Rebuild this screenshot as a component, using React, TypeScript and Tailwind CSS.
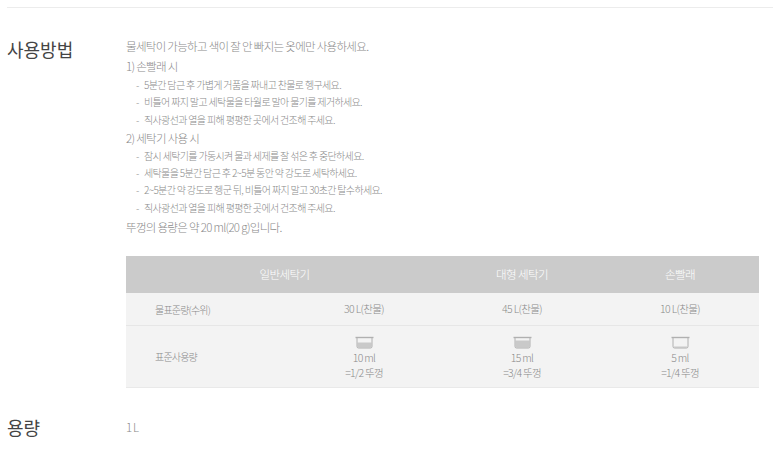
const font = "font-['Noto_Sans_CJK_KR','Noto_Sans',sans-serif]";

const Lid = ({ level }: { level: number }) => {
  // level = fill height of the cup, out of 10
  return (
    <svg width="19" height="13" viewBox="0 0 19 13" className="block">
      <rect x="2.5" y={11.5 - level} width="14" height={level} fill="#c9c9c9" />
      <path d="M0.5 1.5H18.5" stroke="#b0b0b0" strokeWidth="1.4" />
      <path d="M2 2V10.5Q2 12 3.5 12H15.5Q17 12 17 10.5V2" fill="none" stroke="#b0b0b0" strokeWidth="1" />
    </svg>
  );
};

const Step = ({ text }: { text: string }) => (
  <li className="flex h-[17.25px] items-center pl-[10px] text-[10px] tracking-[-0.65px]">
    <span className="w-[8px]">-</span>
    <span>{text}</span>
  </li>
);

const Amount = ({ level, ml, lid }: { level: number; ml: string; lid: string }) => (
  <td className="h-[62px] text-center align-top">
    <div className="flex flex-col items-center pt-[10px] text-[10.5px] leading-[15px] tracking-[-0.7px]">
      <Lid level={level} />
      <span className="mt-[1px]">{ml}</span>
      <span>{lid}</span>
    </div>
  </td>
);

const App = () => {
  return (
    <div className={`${font} h-[449px] w-[780px] overflow-hidden bg-white font-light text-[#8a8a8a]`}>
      <div className="mx-[7px] h-[8px] border-b border-[#ececec]" />

      <section className="flex pt-[28px]">
        <h2 className="w-[126px] pl-[7px] text-[18px] leading-[26px] font-normal text-[#444]">
          사용방법
        </h2>
        <div className="w-[633px]">
          <p className="h-[20px] text-[11.5px] leading-[20px] tracking-[-0.7px]">
            물세탁이 가능하고 색이 잘 안 빠지는 옷에만 사용하세요.
          </p>
          <p className="h-[20px] text-[11.5px] leading-[20px] tracking-[-0.7px]">1) 손빨래 시</p>
          <ul>
            <Step text="5분간 담근 후 가볍게 거품을 짜내고 찬물로 헹구세요." />
            <Step text="비틀어 짜지 말고 세탁물을 타월로 말아 물기를 제거하세요." />
            <Step text="직사광선과 열을 피해 평평한 곳에서 건조해 주세요." />
          </ul>
          <p className="h-[19px] text-[11.5px] leading-[20px] tracking-[-0.7px]">2) 세탁기 사용 시</p>
          <ul>
            <Step text="잠시 세탁기를 가동시켜 물과 세제를 잘 섞은 후 중단하세요." />
            <Step text="세탁물을 5분간 담근 후 2~5분 동안 약 강도로 세탁하세요." />
            <Step text="2~5분간 약 강도로 헹군 뒤, 비틀어 짜지 말고 30초간 탈수하세요." />
            <Step text="직사광선과 열을 피해 평평한 곳에서 건조해 주세요." />
          </ul>
          <p className="mt-[1px] h-[20px] text-[11.5px] leading-[20px] tracking-[-0.7px]">뚜껑의 용량은 약 20 ml(20 g)입니다.</p>

          <table className="mt-[19px] w-[633px] table-fixed border-collapse text-[10.5px] tracking-[-0.6px]">
            <colgroup>
              <col className="w-[159px]" />
              <col className="w-[158px]" />
              <col className="w-[158px]" />
              <col className="w-[158px]" />
            </colgroup>
            <thead>
              <tr className="h-[37px] bg-[#cbcbcb] text-[11.5px] text-white">
                <th colSpan={2} className="font-light">일반세탁기</th>
                <th className="font-light">대형 세탁기</th>
                <th className="font-light">손빨래</th>
              </tr>
            </thead>
            <tbody className="bg-[#f3f3f3]">
              <tr className="h-[33px] border-b border-[#e6e6e6]">
                <td className="pl-[29px] text-[10px] tracking-[-0.8px]">물표준량(수위)</td>
                <td className="text-center">30 L(찬물)</td>
                <td className="text-center">45 L(찬물)</td>
                <td className="text-center">10 L(찬물)</td>
              </tr>
              <tr className="border-b border-[#e9e9e9]">
                <td className="pl-[29px] text-[10px] tracking-[-0.8px]">표준사용량</td>
                <Amount level={5} ml="10 ml" lid="=1/2 뚜껑" />
                <Amount level={7} ml="15 ml" lid="=3/4 뚜껑" />
                <Amount level={1} ml="5 ml" lid="=1/4 뚜껑" />
              </tr>
            </tbody>
          </table>
        </div>
      </section>

      <section className="flex pt-[26px]">
        <h2 className="w-[126px] pl-[7px] text-[18px] leading-[26px] font-normal text-[#444]">
          용량
        </h2>
        <p className="text-[11.5px] leading-[26px] tracking-[-0.8px]">1 L</p>
      </section>
    </div>
  );
};

export default App;
